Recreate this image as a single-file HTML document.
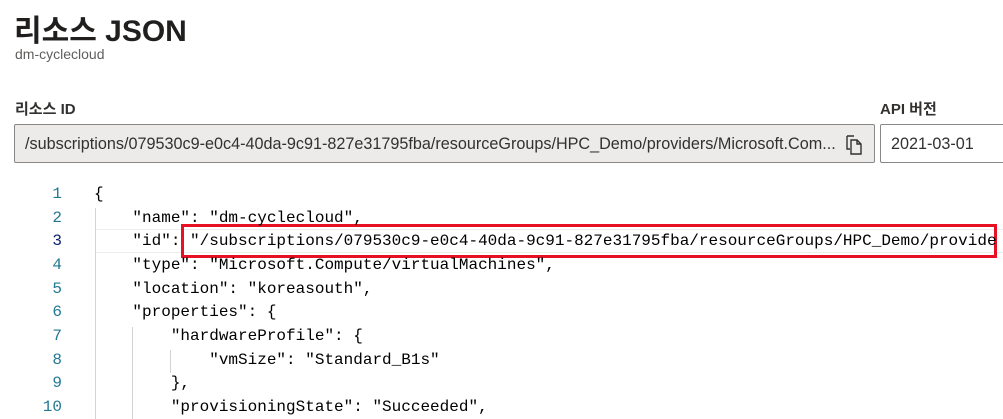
<!DOCTYPE html>
<html><head><meta charset="utf-8"><style>
body{margin:0;width:1003px;height:419px;overflow:hidden;background:#fff;font-family:"Liberation Sans","Noto Sans CJK KR",sans-serif;color:#323130;position:relative}
.a{position:absolute;white-space:pre}
.code{font-family:"Liberation Mono",monospace;font-size:16px;color:#000}
.ln{position:absolute;left:20px;width:42px;text-align:right;font-family:"Liberation Mono",monospace;font-size:16px;color:#237893}
.guide{position:absolute;width:1px;background:#d3d3d3}
</style></head><body>
<div class="a" style="left:14px;top:6px;font-size:30px;font-weight:bold;color:#201f1e">리소스 JSON</div>
<div class="a" style="left:15px;top:46px;font-size:14px;color:#605e5c">dm-cyclecloud</div>
<div class="a" style="left:15px;top:98px;font-size:15px;font-weight:bold;color:#323130">리소스 ID</div>
<div class="a" style="left:880px;top:98px;font-size:15px;font-weight:bold;color:#323130">API 버전</div>
<div class="a" style="left:14px;top:124px;width:859px;height:37px;background:#edebe9;border:1px solid #8a8886;border-radius:2px"></div>
<div class="a" style="left:25px;top:135px;font-size:16.2px;color:#323130">/subscriptions/079530c9-e0c4-40da-9c91-827e31795fba/resourceGroups/HPC_Demo/providers/Microsoft.Com...</div>
<svg class="a" style="left:844px;top:134px" width="20" height="22" viewBox="0 0 20 22"><path d="M3 2h7l0 0M3 2v13h3M7 6h6l4 4v10H7z M13 6v4h4" fill="none" stroke="#323130" stroke-width="1.4"/></svg>
<div class="a" style="left:880px;top:124px;width:130px;height:37px;background:#fff;border:1px solid #8a8886;border-radius:2px"></div>
<div class="a" style="left:891px;top:135px;font-size:16.2px;color:#323130">2021-03-01</div>

<div class="a" style="left:95px;top:229px;width:920px;height:22px;border-top:1px solid #eee;border-bottom:1px solid #eee"></div>
<div class="guide" style="left:95px;top:208px;height:211px"></div>
<div class="guide" style="left:132px;top:327px;height:92px"></div>
<div class="guide" style="left:170px;top:350px;height:23px"></div>
<div class="a" style="left:181px;top:224px;width:810px;height:28px;border:3px solid #e81123"></div>

<div class="ln" style="top:185px">1</div>
<div class="ln" style="top:209px">2</div>
<div class="ln" style="top:232px;color:#0b216f">3</div>
<div class="ln" style="top:256px">4</div>
<div class="ln" style="top:280px">5</div>
<div class="ln" style="top:303px">6</div>
<div class="ln" style="top:327px">7</div>
<div class="ln" style="top:351px">8</div>
<div class="ln" style="top:374px">9</div>
<div class="ln" style="top:398px">10</div>

<div class="a code" style="left:94px;top:185px">{</div>
<div class="a code" style="left:94px;top:209px">    "name": "dm-cyclecloud",</div>
<div class="a code" style="left:94px;top:232px">    "id": "/subscriptions/079530c9-e0c4-40da-9c91-827e31795fba/resourceGroups/HPC_Demo/provide</div>
<div class="a code" style="left:94px;top:256px">    "type": "Microsoft.Compute/virtualMachines",</div>
<div class="a code" style="left:94px;top:280px">    "location": "koreasouth",</div>
<div class="a code" style="left:94px;top:303px">    "properties": {</div>
<div class="a code" style="left:94px;top:327px">        "hardwareProfile": {</div>
<div class="a code" style="left:94px;top:351px">            "vmSize": "Standard_B1s"</div>
<div class="a code" style="left:94px;top:374px">        },</div>
<div class="a code" style="left:94px;top:398px">        "provisioningState": "Succeeded",</div>
</body></html>
